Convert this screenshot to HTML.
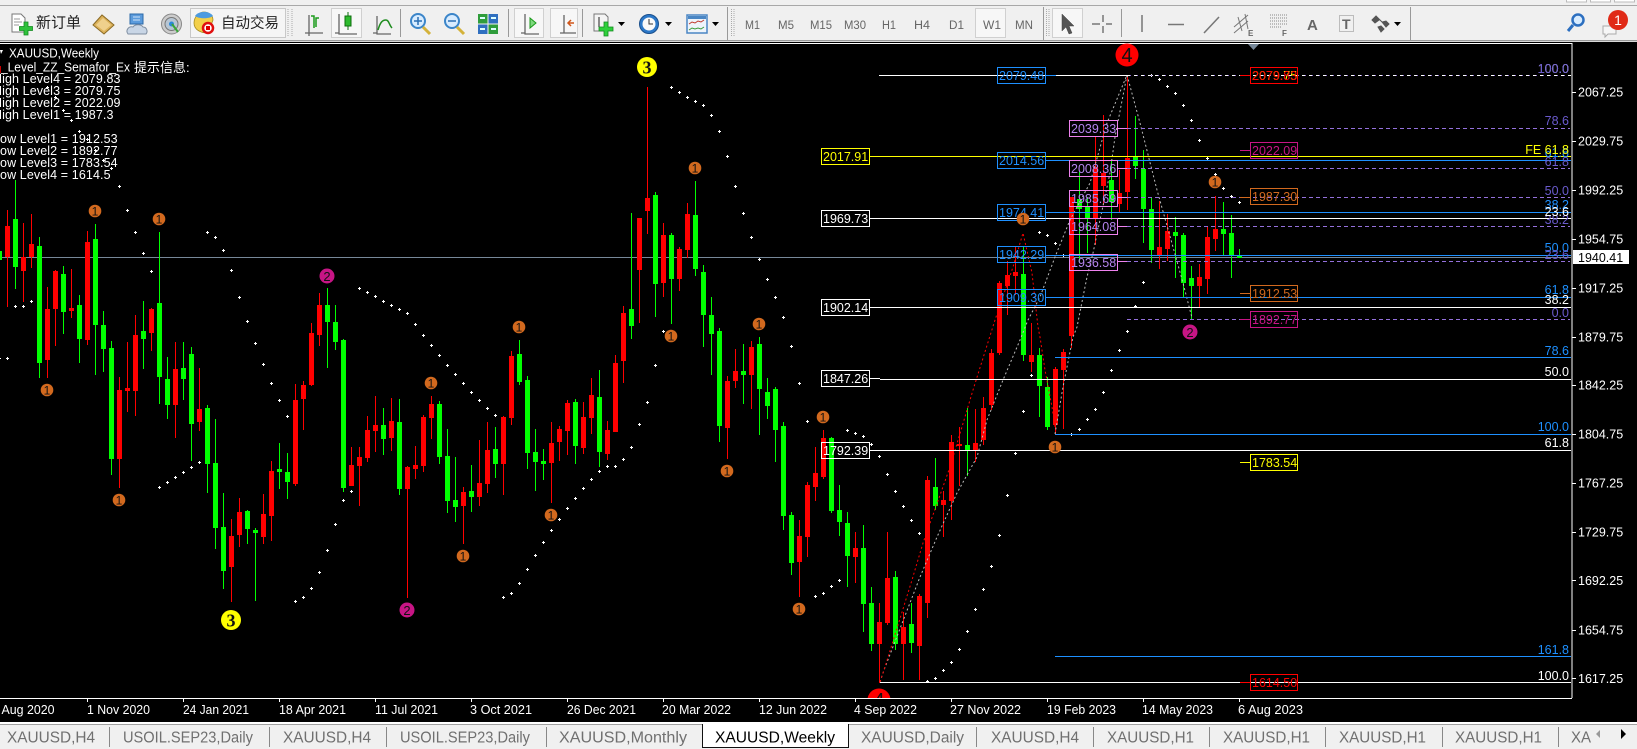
<!DOCTYPE html>
<html><head><meta charset="utf-8"><title>XAUUSD,Weekly</title>
<style>
html,body{margin:0;padding:0;background:#000;width:1637px;height:749px;overflow:hidden}
svg{display:block;position:absolute;left:0;top:0}
text{font-family:"Liberation Sans","Noto Sans CJK SC",sans-serif;font-size:12.5px;white-space:pre}
.c{shape-rendering:crispEdges;fill:none}
.tb{fill:#666;font-size:12.3px}
.w{fill:#fff}.b{fill:#1e90ff}.v{fill:#b584ee}.s{fill:#6a5acd}.y{fill:#ff0}.r{fill:#f00}.m{fill:#c71585}.o{fill:#d2691e}
.e{text-anchor:end}
.tab{fill:#707070;font-size:15.4px}
.n{fill:#111;text-anchor:middle}
.d1{font-size:12px}
.lg{letter-spacing:.1px}
</style></head><body>
<svg width="1637" height="749" viewBox="0 0 1637 749" xmlns="http://www.w3.org/2000/svg">
<defs>
<marker id="p" markerUnits="userSpaceOnUse" markerWidth="3" markerHeight="3" refX="1.5" refY="1.5" overflow="visible"><path d="M0 1.5h3M1.5 0v3" stroke="#fff" stroke-width="1" fill="none" shape-rendering="crispEdges"/></marker>
<clipPath id="cc"><rect x="0" y="44" width="1571" height="654"/></clipPath>
</defs>
<!-- toolbar -->
<rect width="1637" height="42" fill="#f0f0f0"/>
<rect y="5" width="1637" height="1" fill="#a8a8a8"/>
<rect y="40" width="1637" height="1" fill="#9a9a9a"/>
<rect y="41" width="1637" height="1" fill="#d8d8d8"/>
<g fill="#fff" stroke="#bbb"><rect x="1566.5" y="-3" width="20" height="5"/><rect x="1590.5" y="-3" width="20" height="5"/><rect x="1614.5" y="-3" width="20" height="5"/></g>
<!-- new order -->
<path d="M12 14h9l4 4v14H12z" fill="#fff" stroke="#777"/><path d="M14 19h6M14 22h8M14 25h5" stroke="#999"/>
<path d="M24 22h4v4.500h4.500v4H28V35h-4v-4.500h-4.500v-4H24z" fill="#2fc23c" stroke="#148a20" stroke-width=".8"/>
<text x="36" y="27.500" style="font-size:15px" fill="#222">新订单</text>
<!-- book -->
<path d="M93 25l9-10 12 10-10 9z" fill="#dcb25a" stroke="#8a6a24"/><path d="M96 25l7-7 8 7-7 6z" fill="#efd08c"/>
<!-- cloud doc -->
<path d="M130 14h13v10h-13z" fill="#5b9bdc" stroke="#2d6aa8"/><path d="M133 17h7M133 20h7" stroke="#cfe3f7"/>
<path d="M128 34c-3-4 1-8 5-7 2-3 8-3 10 0 4 0 5 5 3 7z" fill="#c9d6e6" stroke="#7e8da0"/>
<!-- signal -->
<circle cx="171.500" cy="24" r="10" fill="#ccc" stroke="#888"/><circle cx="171.500" cy="24" r="6.500" fill="#b7c6d4" stroke="#777"/><circle cx="171.500" cy="24" r="2.500" fill="#2c88d8"/><path d="M172 24l6 8" stroke="#3aa53a" stroke-width="2"/>
<!-- auto -->
<rect x="190.500" y="8.500" width="95" height="29" fill="#f5f5f5" stroke="#c8c8c8"/>
<path d="M194 23c0-7 6-11 10-11s9 3 9 8l-5 13c-7 0-14-3-14-10z" fill="#f3d04a" stroke="#a78c22" stroke-width=".8"/><path d="M195 16c3-5 14-6 18 0-4 3-14 3-18 0z" fill="#4d9be0"/>
<circle cx="208" cy="28" r="5" fill="#fff" stroke="#e01010" stroke-width="2.500"/><rect x="206" y="26" width="4" height="4" fill="#d00"/>
<text x="221" y="28" style="font-size:14.500px" fill="#222">自动交易</text>
<!-- grips and seps -->
<path d="M288 9v28M292 9v28M731.500 9v28M734 9v28M1046.500 9v28M1049 9v28" stroke="#aaa" stroke-dasharray="1 1" class="c"/>
<path d="M400.500 9v28M508.500 9v28M582.500 9v28M727.500 7v34M1043.500 7v34M1121.500 9v28M1410.500 7v34" stroke="#999" class="c"/>
<!-- chart type icons -->
<g fill="none" stroke="#666" stroke-width="1.300">
<path d="M309 15v18h14M305 33h4M309 33v3"/>
<path d="M341 15v18h15M337 33h4"/>
<path d="M377 16v18h14M373 33h4"/>
<path d="M524 16v18h14M520 33h4"/>
<path d="M564 15v18h13M560 33h4"/>
</g>
<path d="M314 28v-12h-3M316 27v-9h3" stroke="#1a9a1a" stroke-width="1.500" fill="none"/>
<rect x="331.500" y="8.500" width="30" height="29" fill="#f7f7f7" stroke="#d0d0d0"/>
<path d="M339 14v20h18M335 33h4" stroke="#666" stroke-width="1.300" fill="none"/>
<rect x="345" y="16" width="6" height="10" fill="#2dbb2d" stroke="#0d6d0d"/><path d="M348 12v4M348 26v4" stroke="#0d6d0d"/>
<path d="M378 30c2-7 4-10 8-10 3 0 3 5 6 8" stroke="#1f8c1f" stroke-width="1.500" fill="none"/>
<!-- zoom -->
<circle cx="418" cy="21" r="7" fill="#d8ecff" stroke="#3b85c9" stroke-width="2"/><path d="M414 21h8M418 17v8" stroke="#2a6fb3" stroke-width="1.500"/><path d="M423 27l7 7" stroke="#d4b23a" stroke-width="3"/>
<circle cx="452" cy="21" r="7" fill="#d8ecff" stroke="#3b85c9" stroke-width="2"/><path d="M448 21h8" stroke="#2a6fb3" stroke-width="1.500"/><path d="M457 27l7 7" stroke="#d4b23a" stroke-width="3"/>
<rect x="478" y="14" width="9.500" height="9.500" fill="#2f9d3c"/><rect x="488.500" y="14" width="9.500" height="9.500" fill="#2f6fc0"/><rect x="478" y="24.500" width="9.500" height="9.500" fill="#2f6fc0"/><rect x="488.500" y="24.500" width="9.500" height="9.500" fill="#2f9d3c"/>
<path d="M480 18h5M491 18h5M480 29h5M491 29h5" stroke="#dff" stroke-width="2"/>
<!-- autoscroll -->
<rect x="514.500" y="8.500" width="29" height="29" fill="#f7f7f7" stroke="#d0d0d0"/>
<path d="M525 14v20h14M521 33h4" stroke="#666" stroke-width="1.300" fill="none"/><path d="M530 18l6 5-6 5z" fill="#7ed87e" stroke="#1a9a1a"/>
<rect x="550.500" y="8.500" width="27" height="29" fill="#f7f7f7" stroke="#d0d0d0"/>
<path d="M564 15v18h12M560 33h4" stroke="#666" stroke-width="1.300" fill="none"/><path d="M574 23h-6m3-3l-3 3 3 3" stroke="#d0561a" stroke-width="1.500" fill="none"/>
<!-- add indicator -->
<path d="M594 14h11l3 3v14h-14z" fill="#f4f4f4" stroke="#777"/><path d="M599 17v10" stroke="#666" stroke-width="1.500"/>
<path d="M604 22h4v5h5v4h-5v5h-4v-5h-5v-4h5z" fill="#2fd03c" stroke="#148a20" stroke-width=".8"/>
<path d="M618 22h7l-3.500 4z" fill="#000"/>
<!-- clock -->
<circle cx="649" cy="24" r="9.500" fill="#2c78c8" stroke="#1a4f8c"/><circle cx="649" cy="24" r="6.500" fill="#fafafa"/><path d="M649 19v5h4" stroke="#333" fill="none"/>
<path d="M665 22h7l-3.500 4z" fill="#000"/>
<!-- template -->
<rect x="687" y="15" width="20" height="18" fill="#eef4fb" stroke="#4a86c4" stroke-width="1.500"/><rect x="688" y="16" width="18" height="3" fill="#4a86c4"/><path d="M689 24l3-2 3 1 3-2 3 1 3-2" stroke="#c0392b" fill="none"/><path d="M689 30l3-2 3 1 3-1 3 1 3-2" stroke="#3a9a3a" fill="none"/>
<path d="M712 22h7l-3.500 4z" fill="#000"/>
<!-- periods -->
<rect x="975.500" y="8.500" width="30" height="29" fill="#f7f7f7" stroke="#d0d0d0"/>
<text class="tb" x="745" y="29" textLength="15" lengthAdjust="spacingAndGlyphs">M1</text>
<text class="tb" x="778" y="29" textLength="16" lengthAdjust="spacingAndGlyphs">M5</text>
<text class="tb" x="810" y="29" textLength="22" lengthAdjust="spacingAndGlyphs">M15</text>
<text class="tb" x="844" y="29" textLength="22" lengthAdjust="spacingAndGlyphs">M30</text>
<text class="tb" x="882" y="29" textLength="14" lengthAdjust="spacingAndGlyphs">H1</text>
<text class="tb" x="914" y="29" textLength="16" lengthAdjust="spacingAndGlyphs">H4</text>
<text class="tb" x="949" y="29" textLength="15" lengthAdjust="spacingAndGlyphs">D1</text>
<text class="tb" x="983" y="29" textLength="18" lengthAdjust="spacingAndGlyphs">W1</text>
<text class="tb" x="1015" y="29" textLength="18" lengthAdjust="spacingAndGlyphs">MN</text>
<!-- drawing tools -->
<rect x="1052.500" y="8.500" width="30" height="29" fill="#f7f7f7" stroke="#d0d0d0"/>
<path d="M1062 14l0 17 4-4 3 7 3-1-3-7h5z" fill="#555" stroke="#444" stroke-width=".5"/>
<path d="M1103 15v7m0 4v7M1092 24h8m6 0h6" stroke="#777" stroke-width="1.500" fill="none"/>
<path d="M1142 15v17" stroke="#777" stroke-width="1.500"/>
<path d="M1168 24.500h16" stroke="#777" stroke-width="1.500"/>
<path d="M1204 33l15-16" stroke="#777" stroke-width="1.500"/>
<path d="M1234 27l14-12M1234 33l14-12M1238 17l4 14M1245 14l3 15" stroke="#777" fill="none"/>
<text x="1248" y="36" style="font-size:8px;font-weight:bold" fill="#666">E</text>
<path d="M1270 15h17M1270 18h17M1270 21h17M1270 24h17M1270 27h11" stroke="#888" stroke-dasharray="1 1" class="c"/>
<text x="1282" y="36" style="font-size:8px;font-weight:bold" fill="#666">F</text>
<text x="1307" y="30" style="font-size:15px;font-weight:bold" fill="#666">A</text>
<rect x="1339.500" y="15.500" width="14" height="16" fill="none" stroke="#888" stroke-dasharray="1 1"/>
<text x="1342" y="29" style="font-size:14px;font-weight:bold" fill="#666">T</text>
<path d="M1376 16l6 6M1372 20l4-4 3 4-4 3zM1382 22l4 5 3-3-3-3zM1378 27l3 5 3-3-3-3z" fill="#555" stroke="#555"/>
<path d="M1394 22h7l-3.500 4z" fill="#000"/>
<!-- search + chat -->
<circle cx="1578" cy="20" r="5.500" fill="#d8ecff" stroke="#2c6fc0" stroke-width="2.500"/><path d="M1573 25l-5 6" stroke="#2c6fc0" stroke-width="3"/>
<path d="M1603 26h13v8h-8l-3 3v-3h-2z" fill="#f6f6f6" stroke="#aaa"/>
<circle cx="1618" cy="20" r="10" fill="#e02a17"/>
<text x="1618" y="25" fill="#fff" style="font-size:14px;text-anchor:middle">1</text>

<!-- chart -->
<rect y="42" width="1637" height="680" fill="#000"/>
<path class="c" d="M0 43.500H1572V698M0 698.500H1572" stroke="#fff"/>
<path d="M1248 44h11l-5.500 6z" fill="#778899"/>
<path class="c" d="M0 257.500H1571" stroke="#778899"/>
<g clip-path="url(#cc)">
<path class="c" stroke="#f00" d="M7.500 210V307M23.500 223V302M31.500 214V268M47.500 287V378M55.500 270V346M71.500 269V318M87.500 231V345M119.500 377V488M127.500 342V412M135.500 315V416M151.500 308V351M175.500 342V438M199.500 368V431M231.500 519V602M239.500 498V547M263.500 494V544M271.500 461V541M295.500 384V486M303.500 381V430M311.500 323V386M319.500 293V346M351.500 447V486M359.500 447V506M367.500 416V462M375.500 396V452M391.500 398V451M407.500 466V598M415.500 446V479M423.500 415V472M431.500 396V439M463.500 487V544M479.500 440V506M487.500 422V493M503.500 416V495M511.500 351V425M551.500 422V503M559.500 426V461M567.500 400V455M583.500 402V454M591.500 378V434M607.500 421V460M615.500 355V432M623.500 306V383M639.500 218V323M647.500 87V234M663.500 223V297M679.500 247V291M687.500 203V258M727.500 376V459M735.500 349V388M751.500 341V409M799.500 520V597M807.500 482V557M815.500 447V501M823.500 430V479M855.500 532V583M879.500 603V683M887.500 532V625M903.500 612V680M919.500 594V680M927.500 476V618M943.500 491V537M951.500 435V520M959.500 427V486M975.500 409V462M983.500 397V445M991.500 349V410M999.500 281V355M1007.500 261V315M1015.500 247V295M1031.500 323V372M1055.500 367V435M1063.500 349V429M1071.500 197V348M1095.500 137V245M1103.500 115V205M1119.500 170V213M1127.500 75V210M1159.500 201V269M1167.500 214V261M1199.500 264V307M1207.500 226V294M1215.500 196V251"/>
<path class="c" stroke="#0f0" d="M15.500 180V289M39.500 237V378M63.500 266V334M79.500 295V363M95.500 224V375M103.500 311V372M111.500 341V475M143.500 301V369M159.500 232V404M167.500 357V419M183.500 342V400M191.500 347V461M207.500 405V493M215.500 419V549M223.500 493V589M247.500 510V544M255.500 528V601M279.500 443V489M287.500 453V499M327.500 288V368M335.500 305V350M343.500 339V492M383.500 408V455M399.500 399V495M439.500 401V464M447.500 429V513M455.500 457V522M471.500 465V512M495.500 427V478M519.500 340V385M527.500 376V469M535.500 429V491M543.500 449V480M575.500 399V464M599.500 370V467M631.500 213V339M655.500 192V317M671.500 233V324M695.500 181V276M703.500 265V347M711.500 297V375M719.500 328V442M743.500 344V404M759.500 337V435M767.500 378V419M775.500 387V462M783.500 422V530M791.500 512V575M831.500 437V513M839.500 485V536M847.500 512V587M863.500 525V632M871.500 587V651M895.500 571V650M911.500 603V653M935.500 458V510M967.500 408V476M1023.500 246V361M1039.500 348V417M1047.500 377V430M1079.500 172V262M1087.500 197V253M1111.500 160V220M1135.500 116V179M1143.500 150V243M1151.500 198V263M1175.500 217V278M1183.500 233V297M1191.500 266V320M1223.500 202V255M1231.500 215V278M1239.500 249V258"/>
<path class="c" stroke="#f00" stroke-width="5" d="M7.500 226V257M23.500 257V271M31.500 244V257M47.500 309V360M55.500 271V309M71.500 308V311M87.500 242V340M119.500 390V459M127.500 388V391M135.500 335V391M151.500 309V333M175.500 369V405M199.500 409V422M231.500 536V567M239.500 512V535M263.500 514V537M271.500 471V516M295.500 400V484M303.500 385V399M311.500 333V385M319.500 305V335M351.500 465V486M359.500 457V466M367.500 430V458M375.500 425V431M391.500 421V438M407.500 467V489M415.500 465V469M423.500 417V466M431.500 404V418M463.500 492V506M479.500 483V497M487.500 450V484M503.500 417V464M511.500 356V418M551.500 443V463M559.500 429V442M567.500 403V431M583.500 417V448M591.500 395V418M607.500 430V454M615.500 363V432M623.500 313V361M639.500 218V270M647.500 198V211M663.500 235V283M679.500 249V279M687.500 214V250M727.500 381V428M735.500 371V381M751.500 347V375M799.500 536V562M807.500 485V537M815.500 473V487M823.500 438V477M855.500 548V557M879.500 622V644M887.500 578V623M903.500 627V644M919.500 596V646M927.500 480V603M943.500 500V505M951.500 442V501M959.500 444V446M975.500 443V450M983.500 408V440M991.500 353V405M999.500 283V353M1007.500 275V286M1015.500 272V276M1031.500 355V362M1055.500 369V425M1063.500 352V370M1071.500 197V336M1095.500 167V218M1103.500 173V186M1119.500 193V204M1127.500 158V192M1159.500 247V256M1167.500 231V249M1199.500 277V286M1207.500 237V279M1215.500 229V239"/>
<path class="c" stroke="#0f0" stroke-width="5" d="M-.5 251V260M15.500 219V267M39.500 246V363M63.500 274V312M79.500 305V339M95.500 239V325M103.500 325V349M111.500 348V459M143.500 331V339M159.500 303V377M167.500 379V405M183.500 368V379M191.500 354V424M207.500 408V464M215.500 463V528M223.500 527V571M247.500 511V529M255.500 530V533M279.500 469V472M287.500 472V482M327.500 305V322M335.500 322V342M343.500 340V488M383.500 425V439M399.500 422V489M439.500 404V457M447.500 456V501M455.500 500V507M471.500 491V497M495.500 449V464M519.500 354V382M527.500 380V453M535.500 452V462M543.500 461V464M575.500 402V446M599.500 397V452M631.500 309V326M655.500 195V284M671.500 235V279M695.500 215V269M703.500 272V315M711.500 315V334M719.500 331V426M743.500 371V375M759.500 344V389M767.500 392V406M775.500 389V430M783.500 426V516M791.500 515V563M831.500 438V511M839.500 510V522M847.500 523V556M863.500 548V604M871.500 603V644M895.500 577V644M911.500 624V643M935.500 487V506M967.500 445V450M1023.500 274V355M1039.500 355V386M1047.500 387V427M1079.500 199V209M1087.500 207V219M1111.500 180V202M1135.500 157V166M1143.500 169V209M1151.500 209V250M1175.500 232V236M1183.500 235V283M1191.500 278V286M1223.500 229V234M1231.500 233V255M1239.500 255V258"/>
</g>
<!-- SAR dots -->
<path fill="none" stroke="none" marker-start="url(#p)" marker-mid="url(#p)" marker-end="url(#p)" d="M-.5 358.500L7.500 358.500L15.500 306.500L23.500 306.500L31.500 301.500L47.500 87.500L55.500 97.500L63.500 110.500L71.500 120.500L79.500 131.500L87.500 139.500L95.500 150.500L103.500 160.500L111.500 168.500L119.500 186.500L127.500 210.500L135.500 232.500L143.500 253.500L151.500 271.500L159.500 487.500L167.500 482.500L175.500 477.500L183.500 472.500L191.500 467.500L199.500 462.500L207.500 232.500L215.500 237.500L223.500 250.500L231.500 270.500L239.500 297.500L247.500 321.500L255.500 343.500L263.500 364.500L271.500 383.500L279.500 400.500L287.500 416.500L295.500 601.500L303.500 597.500L311.500 588.500L319.500 572.500L327.500 550.500L335.500 524.500L343.500 500.500L351.500 491.500L359.500 288.500L367.500 292.500L375.500 296.500L383.500 301.500L391.500 305.500L399.500 309.500L407.500 313.500L415.500 324.500L423.500 335.500L431.500 345.500L439.500 355.500L447.500 365.500L455.500 374.500L463.500 383.500L471.500 392.500L479.500 400.500L487.500 408.500L495.500 415.500L503.500 597.500L511.500 593.500L519.500 583.500L527.500 569.500L535.500 555.500L543.500 542.500L551.500 530.500L559.500 519.500L567.500 508.500L575.500 498.500L583.500 488.500L591.500 479.500L599.500 471.500L607.500 466.500L615.500 466.500L623.500 459.500L631.500 447.500L639.500 424.500L647.500 402.500L655.500 365.500L663.500 331.500L671.500 87.500L679.500 92.500L687.500 97.500L695.500 101.500L703.500 105.500L711.500 115.500L719.500 131.500L727.500 156.500L735.500 186.500L743.500 213.500L751.500 237.500L759.500 259.500L767.500 279.500L775.500 297.500L783.500 317.500L791.500 346.500L799.500 383.500L807.500 421.500L815.500 596.500L823.500 593.500L831.500 586.500L839.500 580.500L847.500 430.500L855.500 433.500L863.500 436.500L871.500 444.500L879.500 456.500L887.500 474.500L895.500 491.500L903.500 506.500L911.500 520.500L919.500 533.500L927.500 681.500L935.500 678.500L943.500 670.500L951.500 662.500L959.500 649.500L967.500 631.500L975.500 609.500L983.500 589.500L991.500 566.500L999.500 535.500L1007.500 495.500L1015.500 453.500L1023.500 411.500L1031.500 375.500L1039.500 232.500L1047.500 235.500L1055.500 243.500L1063.500 255.500L1071.500 434.500L1079.500 429.500L1087.500 419.500L1095.500 409.500L1103.500 392.500L1111.500 370.500L1119.500 350.500L1127.500 331.500L1135.500 306.500L1143.500 282.500L1151.500 75.500L1159.500 79.500L1167.500 86.500L1175.500 93.500L1183.500 105.500L1191.500 120.500L1199.500 140.500L1207.500 158.500L1215.500 174.500L1223.500 188.500L1231.500 196.500L1239.500 202.500"/>
<!-- zigzag curves -->
<g fill="none" stroke-dasharray="2 2.500">
<path stroke="#bbb" d="M880 682L884 670L920 577L937 537L957 493L977 457L987 420L1003 380L1020 340L1028 320L1040 297L1055 257L1070 220L1090 183L1107 123L1127 75L1140 123L1157 190L1173 247L1183 283L1192 318"/>
<path stroke="#bbb" d="M1055 434L1063 387L1073 337L1077 327L1087 277L1093 253L1110 173L1115 137L1127 75"/>
<path stroke="#f00" d="M880 682L884 670L912 580L923 543L950 467L973 390L995 320L1013 267L1023 233L1032 273L1038 327L1040 337L1045 370L1052 407L1056 433"/>
</g>
<!-- horizontal lines -->
<path class="c" stroke="#fff" d="M879 75.500H1127M870 218.500H1571M870 307.500H1571M870 378.500H880M880 379.500H1571M870 450.500H1571M880 682.500H1571"/>
<path class="c" stroke="#ff0" d="M870 156.500H1571M1240 462.500H1250"/>
<path class="c" stroke="#1e90ff" d="M1046 75.500H1056M1046 160.500H1571M1046 212.500H1571M1046 255.500H1571M1046 297.500H1571M1055 357.500H1571M1055 434.500H1571M1055 656.500H1571"/>
<path class="c" stroke="#9370db" stroke-dasharray="4 3" d="M1127 75.500H1571M1127 128.500H1570M1127 168.500H1570M1127 197.500H1570M1127 226.500H1570M1127 261.500H1570M1127 319.500H1570"/>
<path class="c" stroke="#fff" stroke-dasharray="3 4" d="M1127 75.500H1571"/>
<path class="c" stroke="#ee82ee" d="M1118 128.500H1127M1118 168.500H1127M1118 197.500H1127M1118 226.500H1127M1118 261.500H1127"/>
<path class="c" stroke="#f00" d="M1240 75.500H1250M1240 682.500H1250"/>
<path class="c" stroke="#c71585" d="M1240 150.500H1250M1240 319.500H1250"/>
<path class="c" stroke="#d2691e" d="M1240 197.500H1250M1240 293.500H1250"/>
<!-- boxes -->
<g fill="none" class="c">
<g stroke="#fff"><rect x="821.500" y="210.500" width="48" height="16"/><rect x="821.500" y="299.500" width="48" height="16"/><rect x="821.500" y="370.500" width="48" height="16"/><rect x="821.500" y="442.500" width="48" height="16"/></g>
<rect x="821.500" y="148.500" width="48" height="16" stroke="#ff0"/>
<g stroke="#1e90ff"><rect x="997.500" y="67.500" width="48" height="16"/><rect x="997.500" y="152.500" width="48" height="16"/><rect x="997.500" y="204.500" width="48" height="16"/><rect x="997.500" y="246.500" width="48" height="16"/><rect x="997.500" y="289.500" width="48" height="16"/></g>
<g stroke="#ee82ee"><rect x="1069.500" y="120.500" width="48" height="16"/><rect x="1069.500" y="160.500" width="48" height="16"/><rect x="1069.500" y="190.500" width="48" height="16"/><rect x="1069.500" y="218.500" width="48" height="16"/><rect x="1069.500" y="254.500" width="48" height="16"/></g>
<g stroke="#f00"><rect x="1250.500" y="67.500" width="47" height="16"/><rect x="1250.500" y="674.500" width="47" height="16"/></g>
<g stroke="#c71585"><rect x="1250.500" y="142.500" width="47" height="16"/><rect x="1250.500" y="311.500" width="47" height="16"/></g>
<g stroke="#d2691e"><rect x="1250.500" y="188.500" width="47" height="16"/><rect x="1250.500" y="285.500" width="47" height="16"/></g>
<rect x="1250.500" y="454.500" width="47" height="16" stroke="#ff0"/>
</g>
<text class="y" x="823" y="161">2017.91</text>
<text class="w" x="823" y="223">1969.73</text>
<text class="w" x="823" y="312">1902.14</text>
<text class="w" x="823" y="383">1847.26</text>
<text class="w" x="823" y="455">1792.39</text>
<text class="b" x="999" y="80">2079.48</text>
<text class="b" x="999" y="165">2014.56</text>
<text class="b" x="999" y="217">1974.41</text>
<text class="b" x="999" y="259">1942.29</text>
<text class="b" x="999" y="302">1909.30</text>
<text class="v" x="1071" y="133">2039.33</text>
<text class="v" x="1071" y="173">2008.36</text>
<text class="v" x="1071" y="203">1985.69</text>
<text class="v" x="1071" y="231">1964.08</text>
<text class="v" x="1071" y="267">1936.58</text>
<text class="y" x="1252" y="80">2079.75</text>
<text class="r" x="1252" y="80">2079.83</text>
<text class="m" x="1252" y="155">2022.09</text>
<text class="o" x="1252" y="201">1987.30</text>
<text class="o" x="1252" y="298">1912.53</text>
<text class="m" x="1252" y="324">1892.77</text>
<text class="y" x="1252" y="467">1783.54</text>
<text class="r" x="1252" y="687">1614.50</text>
<!-- right fib labels -->
<text class="w e" x="1569" y="73">100.0</text>
<text class="s e" x="1569" y="73">100.0</text>
<text class="s e" x="1569" y="125">78.6</text>
<text class="b e" x="1569" y="157">61.8</text>
<text class="y e" x="1569" y="154">FE 61.8</text>
<text class="s e" x="1569" y="166">61.8</text>
<text class="s e" x="1569" y="195">50.0</text>
<text class="b e" x="1569" y="209">38.2</text>
<text class="s e" x="1569" y="224">38.2</text>
<text class="w e" x="1569" y="216">23.6</text>
<text class="b e" x="1569" y="252">50.0</text>
<text class="s e" x="1569" y="259">23.6</text>
<text class="b e" x="1569" y="294">61.8</text>
<text class="w e" x="1569" y="304">38.2</text>
<text class="s e" x="1569" y="317">0.0</text>
<text class="b e" x="1569" y="355">78.6</text>
<text class="w e" x="1569" y="376">50.0</text>
<text class="b e" x="1569" y="431">100.0</text>
<text class="w e" x="1569" y="447">61.8</text>
<text class="b e" x="1569" y="654">161.8</text>
<text class="w e" x="1569" y="680">100.0</text>
<!-- price axis -->
<path class="c" stroke="#fff" d="M1572 92.500h4M1572 141.500h4M1572 190.500h4M1572 239.500h4M1572 288.500h4M1572 337.500h4M1572 385.500h4M1572 434.500h4M1572 483.500h4M1572 532.500h4M1572 580.500h4M1572 630.500h4M1572 678.500h4"/>
<g class="w">
<text x="1578" y="96.500">2067.25</text>
<text x="1578" y="145.500">2029.75</text>
<text x="1578" y="194.500">1992.25</text>
<text x="1578" y="243.500">1954.75</text>
<text x="1578" y="292.500">1917.25</text>
<text x="1578" y="341.500">1879.75</text>
<text x="1578" y="389.500">1842.25</text>
<text x="1578" y="438.500">1804.75</text>
<text x="1578" y="487.500">1767.25</text>
<text x="1578" y="536.500">1729.75</text>
<text x="1578" y="585">1692.25</text>
<text x="1578" y="634.500">1654.75</text>
<text x="1578" y="683">1617.25</text>
</g>
<rect x="1573" y="250" width="56" height="14" fill="#fff"/>
<text x="1578" y="262" fill="#000">1940.41</text>
<!-- legend -->
<path d="M0 50h3l-2 4z" fill="#fff"/>
<g class="w" fill="#fff">
<text x="9" y="57.500" textLength="90" lengthAdjust="spacingAndGlyphs">XAUUSD,Weekly</text>
<text x="1" y="71.500" textLength="129" lengthAdjust="spacingAndGlyphs">_Level_ZZ_Semafor_Ex</text>
<text x="134" y="72" style="font-size:13px">提示信息:</text>
<text class="lg" x="-7" y="83">High Level4 = 2079.83</text>
<text class="lg" x="-7" y="95">High Level3 = 2079.75</text>
<text class="lg" x="-7" y="107">High Level2 = 2022.09</text>
<text class="lg" x="-7" y="119">High Level1 = 1987.3</text>
<text class="lg" x="-7" y="143">Low Level1 = 1912.53</text>
<text class="lg" x="-7" y="155">Low Level2 = 1892.77</text>
<text class="lg" x="-7" y="167">Low Level3 = 1783.54</text>
<text class="lg" x="-7" y="179">Low Level4 = 1614.5</text>
</g>
<rect x="0" y="66" width="1" height="7" fill="#c00"/>
<!-- semafor markers -->
<g>
<g fill="#d2691e"><circle cx="95" cy="211" r="6.300"/><circle cx="159" cy="219" r="6.300"/><circle cx="47" cy="390" r="6.300"/><circle cx="119" cy="500" r="6.300"/><circle cx="519" cy="327" r="6.300"/><circle cx="431" cy="383" r="6.300"/><circle cx="671" cy="336" r="6.300"/><circle cx="759" cy="324" r="6.300"/><circle cx="823" cy="417" r="6.300"/><circle cx="727" cy="471" r="6.300"/><circle cx="551" cy="515" r="6.300"/><circle cx="463" cy="556" r="6.300"/><circle cx="799" cy="609" r="6.300"/><circle cx="1023" cy="219" r="6.300"/><circle cx="1215" cy="182" r="6.300"/><circle cx="1055" cy="447" r="6.300"/><circle cx="695" cy="168" r="6.300"/></g>
<g><text class="n d1" x="95" y="215.500">1</text><text class="n d1" x="159" y="223.500">1</text><text class="n d1" x="47" y="394.500">1</text><text class="n d1" x="119" y="504.500">1</text><text class="n d1" x="519" y="331.500">1</text><text class="n d1" x="431" y="387.500">1</text><text class="n d1" x="671" y="340.500">1</text><text class="n d1" x="759" y="328.500">1</text><text class="n d1" x="823" y="421.500">1</text><text class="n d1" x="727" y="475.500">1</text><text class="n d1" x="551" y="519.500">1</text><text class="n d1" x="463" y="560.500">1</text><text class="n d1" x="799" y="613.500">1</text><text class="n d1" x="1023" y="223.500">1</text><text class="n d1" x="1215" y="186.500">1</text><text class="n d1" x="1055" y="451.500">1</text><text class="n d1" x="695" y="172.500">1</text></g>
<g fill="#c71585"><circle cx="327" cy="276" r="7.500"/><circle cx="407" cy="610" r="7.500"/><circle cx="1190" cy="332" r="7.500"/></g>
<text class="n" x="327" y="281" style="font-size:13px">2</text><text class="n" x="407" y="615" style="font-size:13px">2</text><text class="n" x="1190" y="337" style="font-size:13px">2</text>
<circle cx="231" cy="620" r="10" fill="#ff0"/><circle cx="647" cy="67" r="10" fill="#ff0"/>
<text class="n" x="231" y="626.500" style="font-size:18px;font-family:'Liberation Serif',serif;font-weight:bold">3</text>
<text class="n" x="647" y="73.500" style="font-size:18px;font-family:'Liberation Serif',serif;font-weight:bold">3</text>
<circle cx="1127" cy="55" r="11.500" fill="#f00"/><text class="n" x="1127" y="62" style="font-size:20px">4</text>
<g clip-path="url(#cc)"><circle cx="879" cy="700" r="11.500" fill="#f00"/><text class="n" x="879" y="707" style="font-size:20px">4</text></g>
</g>
<!-- time axis -->
<path class="c" stroke="#fff" d="M87.500 698v4M183.500 698v4M279.500 698v4M375.500 698v4M471.500 698v4M567.500 698v4M663.500 698v4M759.500 698v4M855.500 698v4M951.500 698v4M1047.500 698v4M1143.500 698v4M1239.500 698v4"/>
<g class="w">
<text x="1.500" y="714" textLength="53" lengthAdjust="spacingAndGlyphs">Aug 2020</text>
<text x="87" y="714" textLength="63" lengthAdjust="spacingAndGlyphs">1 Nov 2020</text>
<text x="183" y="714" textLength="66" lengthAdjust="spacingAndGlyphs">24 Jan 2021</text>
<text x="279" y="714" textLength="67" lengthAdjust="spacingAndGlyphs">18 Apr 2021</text>
<text x="375" y="714" textLength="63" lengthAdjust="spacingAndGlyphs">11 Jul 2021</text>
<text x="470" y="714" textLength="62" lengthAdjust="spacingAndGlyphs">3 Oct 2021</text>
<text x="567" y="714" textLength="69" lengthAdjust="spacingAndGlyphs">26 Dec 2021</text>
<text x="662" y="714" textLength="69" lengthAdjust="spacingAndGlyphs">20 Mar 2022</text>
<text x="759" y="714" textLength="68" lengthAdjust="spacingAndGlyphs">12 Jun 2022</text>
<text x="854" y="714" textLength="63" lengthAdjust="spacingAndGlyphs">4 Sep 2022</text>
<text x="950" y="714" textLength="71" lengthAdjust="spacingAndGlyphs">27 Nov 2022</text>
<text x="1047" y="714" textLength="69" lengthAdjust="spacingAndGlyphs">19 Feb 2023</text>
<text x="1142" y="714" textLength="71" lengthAdjust="spacingAndGlyphs">14 May 2023</text>
<text x="1238" y="714" textLength="65" lengthAdjust="spacingAndGlyphs">6 Aug 2023</text>
</g>
<!-- tab bar -->
<rect y="722" width="1637" height="27" fill="#f0f0f0"/>
<rect y="722" width="1637" height="2" fill="#fff"/>
<rect y="724" width="1637" height="1" fill="#a0a0a0"/>
<path class="c" stroke="#888" d="M109.500 727v20M269.500 727v20M386.500 727v20M546.500 727v20M976.500 727v20M1093.500 727v20M1209.500 727v20M1325.500 727v20M1442.500 727v20M1558.500 727v20"/>
<path d="M702.500 724V747.500H848.500V724" fill="#fff" stroke="#111" stroke-width="1" shape-rendering="crispEdges"/>
<rect x="703" y="723" width="145" height="3" fill="#fff"/>
<text class="tab" x="7" y="742.500" textLength="88" lengthAdjust="spacingAndGlyphs">XAUUSD,H4</text>
<text class="tab" x="123" y="742.500" textLength="130" lengthAdjust="spacingAndGlyphs">USOIL.SEP23,Daily</text>
<text class="tab" x="283" y="742.500" textLength="88" lengthAdjust="spacingAndGlyphs">XAUUSD,H4</text>
<text class="tab" x="400" y="742.500" textLength="130" lengthAdjust="spacingAndGlyphs">USOIL.SEP23,Daily</text>
<text class="tab" x="559" y="742.500" textLength="128" lengthAdjust="spacingAndGlyphs">XAUUSD,Monthly</text>
<text class="tab" x="715" y="742.500" textLength="120" lengthAdjust="spacingAndGlyphs" style="fill:#000">XAUUSD,Weekly</text>
<text class="tab" x="861" y="742.500" textLength="103" lengthAdjust="spacingAndGlyphs">XAUUSD,Daily</text>
<text class="tab" x="991" y="742.500" textLength="88" lengthAdjust="spacingAndGlyphs">XAUUSD,H4</text>
<text class="tab" x="1107" y="742.500" textLength="87" lengthAdjust="spacingAndGlyphs">XAUUSD,H1</text>
<text class="tab" x="1223" y="742.500" textLength="87" lengthAdjust="spacingAndGlyphs">XAUUSD,H1</text>
<text class="tab" x="1339" y="742.500" textLength="87" lengthAdjust="spacingAndGlyphs">XAUUSD,H1</text>
<text class="tab" x="1455" y="742.500" textLength="87" lengthAdjust="spacingAndGlyphs">XAUUSD,H1</text>
<text class="tab" x="1571" y="742.500" textLength="20" lengthAdjust="spacingAndGlyphs">XA</text>
<rect x="1592" y="726" width="45" height="22" fill="#f0f0f0"/>
<path d="M1600 736v-8l-4 4z" fill="#999" transform="translate(0 2)"/>
<path d="M1621 729v10l5-5z" fill="#000"/>
</svg>
</body></html>
